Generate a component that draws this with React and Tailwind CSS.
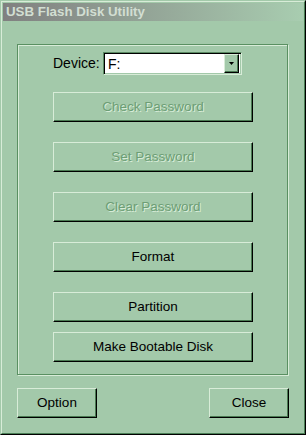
const BG = '#a3c9aa';

function Btn({ children, disabled, className = '' }) {
  return (
    <div
      className={`h-[30px] flex items-center justify-center border border-t-[#d8ecd8] border-l-[#d8ecd8] border-r-black border-b-black shadow-[inset_-1px_-1px_0_#4a7a52] text-[13.5px] ${
        disabled ? 'text-[#6d9e75] [text-shadow:1px_1px_0_#d8ecd8]' : 'text-black'
      } ${className}`}
    >
      {children}
    </div>
  );
}

export default function App() {
  return (
    <div className="w-[306px] h-[435px] bg-[#a3c9aa] border border-t-[#a3c9aa] border-l-[#a3c9aa] border-r-black border-b-black font-['Liberation_Sans',Arial,sans-serif]">
      <div className="h-full border border-t-[#d8ecd8] border-l-[#d8ecd8] border-r-[#4a7f55] border-b-[#4a7f55] p-px flex flex-col">
        <div className="h-[18px] bg-gradient-to-r from-[#808080] to-[#a8cdb0] text-[13.3px] font-bold text-[#d2ded2] pl-[3px] leading-[18px]">
          USB Flash Disk Utility
        </div>
        <div className="ml-[14px] mt-[23px] w-[271px] h-[331px] border border-[#5a9062] shadow-[1px_1px_0_#d8ecd8,inset_1px_1px_0_#d8ecd8] flex flex-col pl-[35px] pt-[7px]">
          <div className="flex items-center h-[23px]">
            <div className="w-[46px] text-right text-[14px] text-black whitespace-nowrap">Device:</div>
            <div className="ml-[4px] w-[139px] h-[23px] bg-white border border-t-[#5a8a62] border-l-[#5a8a62] border-r-[#d8ecd8] border-b-[#d8ecd8] shadow-[inset_1px_1px_0_#000,inset_-1px_-1px_0_#a3c9aa] flex items-center p-[2px]">
              <div className="flex-1 pl-[2px] text-[14px] text-black leading-none">F:</div>
              <div className="w-[15px] h-[19px] bg-[#a3c9aa] border border-t-[#d8ecd8] border-l-[#d8ecd8] border-r-black border-b-black shadow-[inset_-1px_-1px_0_#4a7a52] flex items-center justify-center">
                <svg width="5" height="3" viewBox="0 0 5 3">
                  <path d="M0 0H5L2.5 3Z" fill="#000" />
                </svg>
              </div>
            </div>
          </div>
          <Btn disabled className="w-[200px] mt-[17px]">Check Password</Btn>
          <Btn disabled className="w-[200px] mt-[20px]">Set Password</Btn>
          <Btn disabled className="w-[200px] mt-[20px]">Clear Password</Btn>
          <Btn className="w-[200px] mt-[20px]">Format</Btn>
          <Btn className="w-[200px] mt-[20px]">Partition</Btn>
          <Btn className="w-[200px] mt-[10px]">Make Bootable Disk</Btn>
        </div>
        <div className="ml-[14px] mt-[13px] w-[272px] flex justify-between">
          <Btn className="w-[80px]">Option</Btn>
          <Btn className="w-[80px]">Close</Btn>
        </div>
      </div>
    </div>
  );
}
